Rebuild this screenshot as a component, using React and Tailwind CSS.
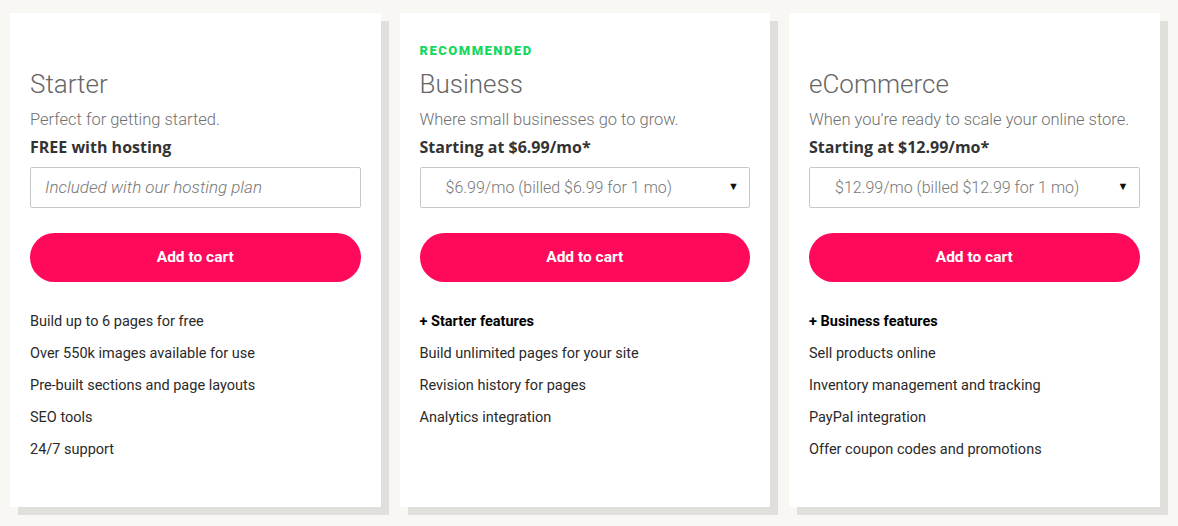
const plans = [
  {
    label: "",
    name: "Starter",
    tagline: "Perfect for getting started.",
    price: "FREE with hosting",
    placeholder: "Included with our hosting plan",
    heading: null,
    features: [
      "Build up to 6 pages for free",
      "Over 550k images available for use",
      "Pre-built sections and page layouts",
      "SEO tools",
      "24/7 support",
    ],
  },
  {
    label: "RECOMMENDED",
    name: "Business",
    tagline: "Where small businesses go to grow.",
    price: "Starting at $6.99/mo*",
    option: "$6.99/mo (billed $6.99 for 1 mo)",
    heading: "+ Starter features",
    features: [
      "Build unlimited pages for your site",
      "Revision history for pages",
      "Analytics integration",
    ],
  },
  {
    label: "",
    name: "eCommerce",
    tagline: "When you’re ready to scale your online store.",
    price: "Starting at $12.99/mo*",
    option: "$12.99/mo (billed $12.99 for 1 mo)",
    heading: "+ Business features",
    features: [
      "Sell products online",
      "Inventory management and tracking",
      "PayPal integration",
      "Offer coupon codes and promotions",
    ],
  },
];

const PlanCard = ({ plan }) => {
  return (
    <div className="w-[370.5px] h-[494px] shrink-0 bg-white shadow-[8px_8px_0_0_#e0dfdb] px-5 pt-[29px]">
      <div className="h-[18px] text-[13px] leading-[18px] font-black tracking-[1.5px] text-[#17d85e] font-['Roboto',sans-serif]">
        {plan.label}
      </div>
      <h2 className="mt-[9px] text-[26px] leading-[30px] font-light text-[#666] font-['Roboto',sans-serif]">
        {plan.name}
      </h2>
      <p className="mt-[10px] text-[16.5px] leading-[22px] font-light text-[#707070] font-['Roboto',sans-serif]">
        {plan.tagline}
      </p>
      <p className="mt-[5px] text-[16px] leading-[22px] font-bold text-[#333] font-['Open_Sans',sans-serif]">
        {plan.price}
      </p>
      {plan.option ? (
        <div className="mt-[9px] h-[41px] border border-[#c8c8c8] rounded-[2px] flex items-center pl-[25px] pr-[10px] text-[16px] font-light text-[#777] font-['Roboto',sans-serif]">
          <span className="flex-1">{plan.option}</span>
          <span className="text-[11px] text-[#111]">▼</span>
        </div>
      ) : (
        <div className="mt-[9px] h-[41px] border border-[#c8c8c8] rounded-[2px] flex items-center pl-[14px] text-[17px] italic font-light text-[#777] font-['Roboto',sans-serif]">
          {plan.placeholder}
        </div>
      )}
      <button className="mt-[25px] w-full h-[49px] rounded-full bg-[#ff0a5a] text-white text-[15.5px] font-bold font-['Roboto',sans-serif]">
        Add to cart
      </button>
      <ul className="mt-[24px] text-[14.5px] leading-[32px] text-[#2a2a2a] font-['Roboto',sans-serif]">
        {plan.heading && (
          <li className="font-bold text-black">{plan.heading}</li>
        )}
        {plan.features.map((f) => (
          <li key={f}>{f}</li>
        ))}
      </ul>
    </div>
  );
};

const App = () => {
  return (
    <div className="w-[1178px] h-[526px] bg-[#f8f7f3] overflow-hidden">
      <div className="flex gap-[19px] pl-[10px] pt-[13px]">
        {plans.map((p) => (
          <PlanCard key={p.name} plan={p} />
        ))}
      </div>
    </div>
  );
};

export default App;
